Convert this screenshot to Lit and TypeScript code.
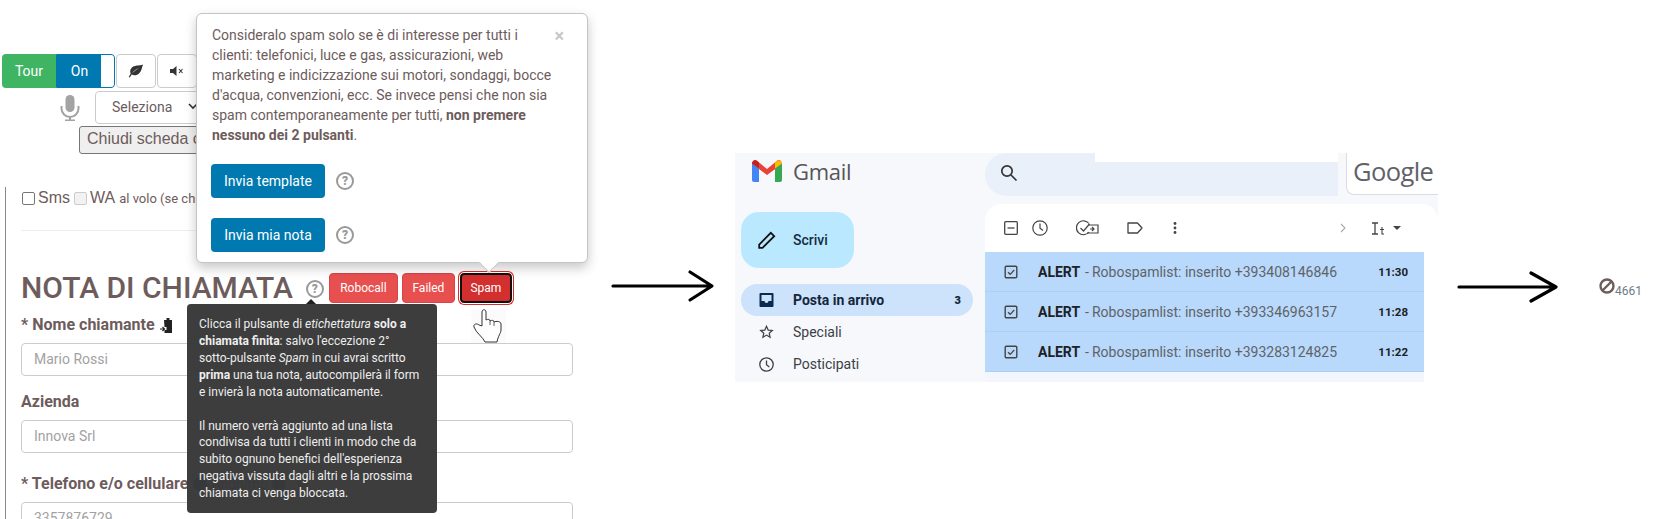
import { LitElement, html, css, svg } from "lit";
import { customElement } from "lit/decorators.js";

const ROWS = [
  ["+393408146846", "11:30"],
  ["+393346963157", "11:28"],
  ["+393283124825", "11:22"],
];

const checked = svg`<rect x="1.2" y="1.2" width="11.6" height="11.6" rx="1.2" fill="none" stroke="#444" stroke-width="1.4"/><path d="M4 7.2l2.2 2.1L10.2 5" fill="none" stroke="#444" stroke-width="1.2"/>`;

@customElement("app-root")
export class AppRoot extends LitElement {
  static styles = css`
    :host { display: block; position: relative; width: 1680px; height: 519px; overflow: hidden; background: #fff; font-family: Roboto, sans-serif; color: #6d5c5c; }
    * { box-sizing: border-box; }
    .canvas-left { position: absolute; left: 0; top: 0; width: 600px; height: 519px; overflow: hidden; padding-top: 54px; }
    .toolbar { display: flex; margin-left: 2px; height: 34px; }
    .tb { height: 34px; display: flex; align-items: center; justify-content: center; font-size: 14px; color: #fff; border-radius: 4px; }
    .tour { width: 54px; background: #3fb463; border-radius: 4px 0 0 4px; }
    .on { width: 59px; background: #0079b1; border-radius: 0 4px 4px 0; position: relative; padding-right: 12px; border: 1px solid #0079b1; }
    .on i { position: absolute; right: 0; top: 0; bottom: 0; width: 13px; background: #fff; border-radius: 0 3px 3px 0; }
    .ghost { width: 40px; background: #fff; border: 1px solid #ccc; margin-left: 1px; }
    .row2 { display: flex; align-items: center; margin: 3px 0 0 60px; height: 33px; }
    .mic { width: 20px; height: 26px; margin-right: 15px; }
    .select { width: 120px; height: 33px; border: 1px solid #ccc; border-radius: 4px; font-size: 14px; padding: 0 0 2px 16px; display: flex; align-items: center; gap: 16px; }
    .close-tab { display: block; margin: 2px 0 0 79px; width: 200px; height: 28px; background: #efefef; border: 1px solid #767676; border-radius: 3px; font: 16px "Liberation Sans", sans-serif; color: #6d5c5c; padding: 0 7px; line-height: 23px; white-space: nowrap; overflow: hidden; }
    .section { margin: 33px 0 0 5px; padding: 2px 0 0 15px; border-left: 1px solid #888; width: 568px; height: 340px; }
    .checks { display: flex; align-items: center; height: 18px; font: 16px "Liberation Sans", sans-serif; white-space: nowrap; }
    .cb { width: 13px; height: 13px; border: 1px solid #767676; border-radius: 2px; background: #fff; margin: 0 3px 0 1px; }
    .cb.off { border-color: #ccc; background: #f2f2f2; margin-left: 4px; }
    .small { font: 13px Roboto, sans-serif; margin-left: 4px; }
    hr { border: 0; border-top: 1px solid #eee; margin: 23px 0 0; }
    .title-row { display: flex; align-items: center; margin-top: 37px; height: 40px; }
    h1 { margin: 0; font-size: 30px; font-weight: 500; line-height: 40px; white-space: nowrap; letter-spacing: 0; }
    .help { display: flex; align-items: center; justify-content: center; width: 18px; height: 18px; border: 2.5px solid #999; border-radius: 50%; color: #999; font-size: 12px; font-weight: 900; line-height: 1; flex: none; }
    .title-row .help { margin: 1px 5px 0 13px; }
    .red { height: 30px; margin-right: 4px; background: #e85050; border-radius: 4px; color: #fff; font-size: 12px; display: flex; align-items: center; justify-content: center; border: 1px solid #d9434a; }
    .robocall { width: 69px; }
    .failed { width: 53px; }
    .spam { width: 52px; background: #d32f2f; border: 2px solid #111; outline: 1px solid #fff; box-shadow: 0 0 0 2px #d32f2f; margin-left: 1px; font-size: 12px; }
    label { display: block; font-size: 16px; font-weight: 700; line-height: 20px; white-space: nowrap; height: 20px; }
    .l1 { margin-top: 7px; display: flex; align-items: center; gap: 5px; }
    .l2 { margin-top: 16px; }
    .l3 { margin-top: 21px; display: flex; align-items: center; }
    .input { width: 552px; height: 33px; border: 1px solid #ccc; border-radius: 4px; margin-top: 8px; padding-left: 12px; font-size: 14px; line-height: 31px; color: #a2a2a2; }
    .behind { display: flex; align-items: center; gap: 4px; margin-left: 5px; font-weight: 400; color: #3d6a85; font-size: 14px; }
    .behind .dot { width: 14px; height: 14px; border-radius: 50%; background: #1f5f99; }
    .behind .bulb { width: 10px; height: 14px; border-radius: 50% 50% 30% 30%; background: #b09040; margin-left: 8px; }

    .popover { position: absolute; left: 196px; top: 13px; width: 392px; height: 250px; background: #fff; border: 1px solid #c4c4c4; border-radius: 6px; box-shadow: 0 5px 12px rgba(0,0,0,.22); padding: 11px 15px 0 14px; font-size: 14px; line-height: 20px; }
    .popover p { margin: 0 0 0 1px; width: 346px; }
    .popover .x { position: absolute; right: 23px; top: 12px; color: #c8c8c8; font-size: 18px; font-weight: 700; line-height: 20px; }
    .pop-row { display: flex; align-items: center; margin-top: 20px; gap: 11px; }
    .pop-row.first { margin-top: 19px; }
    .blue { width: 114px; height: 34px; background: #0079b1; border-radius: 4px; color: #fff; font-size: 14px; display: flex; align-items: center; justify-content: center; }
    .caret { position: absolute; left: 285px; bottom: -8px; width: 14px; height: 14px; background: #fff; border-right: 1px solid #c4c4c4; border-bottom: 1px solid #c4c4c4; transform: rotate(45deg); }
    .tooltip { position: absolute; left: 187px; top: 304px; width: 250px; height: 209px; background: rgba(55,55,55,.97); border-radius: 4px; padding: 12px 12px; color: #eee; font-size: 12px; line-height: 16.9px; }
    .tooltip::before { content: ""; position: absolute; left: 119px; top: -5px; border: 5px solid transparent; border-top: 0; border-bottom-color: #222; }
    .tooltip p { margin: 0 0 17px; }
    .hand { position: absolute; left: 471px; top: 309px; width: 35px; height: 34px; background: #fbfbfb; }

    .arrow { position: absolute; }
    .a1 { left: 610px; top: 268px; }
    .a2 { left: 1456px; top: 269px; }
    .blocked { position: absolute; left: 1599px; top: 278px; display: flex; align-items: flex-start; font-size: 12px; color: #6c7a89; line-height: 14px; }
    .blocked span { margin-top: 6px; }

    .gmail { position: absolute; left: 735px; top: 153px; width: 703px; height: 229px; display: flex; background: #f6f8fc; font-family: Roboto, sans-serif; color: #1f1f1f; }
    .side { width: 250px; flex: none; padding-left: 6px; }
    .brand { display: flex; align-items: center; height: 40px; padding: 0 0 0 11px; margin-top: -2px; gap: 11px; font-family: "Open Sans", sans-serif; font-size: 22px; color: #555; letter-spacing: -.3px; }
    .compose { margin-top: 21px; width: 113px; height: 56px; border-radius: 18px; background: #b9e8ff; display: flex; align-items: center; padding-left: 17px; gap: 17px; font-size: 14px; font-weight: 500; color: #152d3f; }
    .nav { width: 232px; height: 32px; display: flex; align-items: center; padding: 0 12px 0 18px; gap: 19px; font-size: 14px; color: #3c3f44; border-radius: 16px; margin-top: -1px; }
    .nav svg { width: 15px; flex: none; }
    .nav span { flex: 1; }
    .nav.active { margin-top: 16px; background: #cde2fb; color: #13263c; font-weight: 700; }
    .nav.active b { font-size: 11px; }
    .nav + .nav { margin-top: 0; }
    .main { width: 453px; flex: none; display: flex; flex-direction: column; }
    .top { height: 43px; display: flex; flex: none; }
    .search { width: 353px; height: 43px; background: #e9f0f9; border-radius: 22px 0 0 22px; position: relative; padding: 11px 0 0 15px; }
    .notch { position: absolute; right: 0; top: 0; width: 243px; height: 9px; background: #fff; }
    .google { margin-left: 8px; width: 92px; height: 42px; background: #fff; border: 1px solid #dadce0; border-width: 0 0 1px 1px; border-radius: 0 0 0 8px; overflow: hidden; font-family: "Open Sans", sans-serif; font-size: 25.5px; font-weight: 500; color: #5f6368; line-height: 37px; padding-left: 6px; white-space: nowrap; letter-spacing: -.6px; }
    .card { margin-top: 8px; background: #fff; border-radius: 16px 16px 0 0; flex: 1; position: relative; }
    .tools { height: 48px; display: flex; align-items: center; position: relative; padding-left: 19px; }
    .tools svg { flex: none; }
    .tool-right { margin-left: auto; display: flex; align-items: center; margin-right: 37px; }
    .rows { width: 439px; background: #f3f6fc; height: 130px; }
    .row { height: 40px; background: #b8d9fb; border-bottom: 1px solid #acd0f2; display: flex; align-items: center; padding: 0 16px 0 19px; font-size: 14px; color: #5f6368; white-space: nowrap; }
    .row b { color: #202124; font-weight: 700; margin-left: 20px; }
    .row .dash { margin: 0 3px 0 5px; }
    .row time { margin-left: auto; font-size: 11.5px; font-weight: 700; color: #202124; }
  `;

  private help() {
    return html`<span class="help">?</span>`;
  }

  render() {
    return html`
      <div class="canvas-left">
        <div class="toolbar">
          <div class="tb tour">Tour</div>
          <div class="tb on">On<i></i></div>
          <div class="tb ghost">
            <svg width="16" height="14" viewBox="0 0 16 14"><path d="M15 .5C11 1.8 6 1 3.5 4 1.8 6 2 8.3 2.7 9.5L.7 13l1 .6 2-3c2 1.3 5.5 1 7.500-1.300C13.500 7 14 3.500 15 .5zM4 9.500C5.500 7 8 5 11 4 8.500 5.500 6 7.500 4 9.500z" fill="#333" fill-rule="evenodd"/></svg>
          </div>
          <div class="tb ghost">
            <svg width="14" height="10" viewBox="0 0 14 10"><path d="M0 3h3l3.500-3v10L3 7H0z" fill="#333"/><path d="M9 3l3.500 4M12.500 3L9 7" stroke="#333" stroke-width="1.100"/></svg>
          </div>
        </div>
        <div class="row2">
          <svg class="mic" viewBox="0 0 20 26"><rect x="5.500" y="0" width="9" height="17" rx="4.500" fill="#a3a3a3"/><path d="M1.500 11v2.500a8.500 8.500 0 0 0 17 0V11" fill="none" stroke="#a3a3a3" stroke-width="2"/><path d="M10 22v3M5 25.500h10" stroke="#a3a3a3" stroke-width="2"/></svg>
          <div class="select">Seleziona
            <svg width="10" height="7" viewBox="0 0 10 7"><path d="M1 1l4 4 4-4" fill="none" stroke="#333" stroke-width="1.600"/></svg>
          </div>
        </div>
        <div class="close-tab">Chiudi scheda chiamata</div>
        <div class="section">
          <div class="checks"><span class="cb"></span>Sms<span class="cb off"></span>WA<span class="small">al volo (se chiamata persa)</span></div>
          <hr />
          <div class="title-row">
            <h1>NOTA DI CHIAMATA</h1>
            ${this.help()}
            <div class="red robocall">Robocall</div>
            <div class="red failed">Failed</div>
            <div class="red spam">Spam</div>
          </div>
          <label class="l1">* Nome chiamante
            <svg width="14" height="15" viewBox="0 0 14 15"><path d="M4 2h2.500V0h3v2H12v13H4.500v-3h2v-3h-2z" fill="#222"/><path d="M0 11h4M2.500 9l2 2-2 2" fill="none" stroke="#222" stroke-width="1.200"/></svg>
          </label>
          <div class="input">Mario Rossi</div>
          <label class="l2">Azienda</label>
          <div class="input">Innova Srl</div>
          <label class="l3">* Telefono e/o cellulare
            <span class="behind"><i class="dot"></i>Anonimo<i class="dot"></i><i class="bulb"></i></span>
          </label>
          <div class="input">3357876729</div>
        </div>
      </div>

      <div class="popover">
        <p>Consideralo spam solo se è di interesse per tutti i clienti: telefonici, luce e gas, assicurazioni, web marketing e indicizzazione sui motori, sondaggi, bocce d'acqua, convenzioni, ecc. Se invece pensi che non sia spam contemporaneamente per tutti, <b>non premere nessuno dei 2 pulsanti</b>.</p>
        <span class="x">×</span>
        <div class="pop-row first"><div class="blue">Invia template</div>${this.help()}</div>
        <div class="pop-row"><div class="blue">Invia mia nota</div>${this.help()}</div>
        <i class="caret"></i>
      </div>

      <div class="tooltip">
        <p>Clicca il pulsante di <em>etichettatura</em> <b>solo a chiamata finita</b>: salvo l'eccezione 2°<br />sotto-pulsante <em>Spam</em> in cui avrai scritto<br /><b>prima</b> una tua nota, autocompilerà il form<br />e invierà la nota automaticamente.</p>
        <p>Il numero verrà aggiunto ad una lista condivisa da tutti i clienti in modo che da subito ognuno benefici dell'esperienza negativa vissuta dagli altri e la prossima chiamata ci venga bloccata.</p>
      </div>

      <div class="hand">
        <svg width="35" height="34" viewBox="0 0 35 34"><path d="M11 17V3c0-3 4-3 4 0v8c2-1 4-1 4 1 2-1 4-1 4 1 2-1 7-1 7 2v6c0 3-3 6-4 12H14C12 28 5 24 3 18c-1-3 3-4 5-2z" fill="#fff" stroke="#333" stroke-width="1" stroke-linejoin="round"/><path d="M19 12v4M23 13v4" stroke="#333" stroke-width=".8"/></svg>
      </div>

      <svg class="arrow a1" width="106" height="36" viewBox="0 0 106 36"><path d="M3 18h98M80 4l22 14-22 14" fill="none" stroke="#000" stroke-width="3.200" stroke-linecap="round" stroke-linejoin="round"/></svg>

      <div class="gmail">
        <div class="side">
          <div class="brand">
            <svg width="30" height="22" viewBox="0 0 30 22">
              <path d="M0 3l2-3h2l11 9v6L0 4z" fill="#e94335"/><path d="M30 3l-2-3h-2L15 9v6l15-11z" fill="#e94335"/>
              <path d="M0 3.500l7 5V22H2a2 2 0 0 1-2-2z" fill="#4285f4"/><path d="M30 3.500l-7 5V22h5a2 2 0 0 0 2-2z" fill="#34a853"/>
              <path d="M0 3a3 3 0 0 1 5-2l2 1.500v6L0 3.500z" fill="#c5221f"/><path d="M30 3a3 3 0 0 0-5-2l-2 1.500v6l7-5z" fill="#fbbc04"/>
            </svg>
            Gmail
          </div>
          <div class="compose">
            <svg width="18" height="18" viewBox="0 0 18 18"><path d="M1.200 16.800v-3.300L12.800 1.800l3.400 3.400L4.500 16.800z" fill="none" stroke="#111" stroke-width="1.800"/></svg>
            Scrivi
          </div>
          <div class="nav active">
            <svg height="14" viewBox="0 0 14 14"><path d="M1 0h12a1 1 0 0 1 1 1v12a1 1 0 0 1-1 1H1a1 1 0 0 1-1-1V1a1 1 0 0 1 1-1zm1 2v6h3a2 2 0 0 0 4 0h3V2z" fill="#0b2a4f" fill-rule="evenodd"/></svg>
            <span>Posta in arrivo</span><b>3</b>
          </div>
          <div class="nav">
            <svg height="14" viewBox="0 0 14 14"><path d="M7 1.300l1.700 3.800 4.100.4-3.100 2.700.9 4-3.600-2.100-3.600 2.100.9-4L1.200 5.500l4.100-.4z" fill="none" stroke="#3c3f44" stroke-width="1.200"/></svg>
            <span>Speciali</span>
          </div>
          <div class="nav">
            <svg height="15" viewBox="0 0 15 15"><circle cx="7.500" cy="7.500" r="6.700" fill="none" stroke="#3c3f44" stroke-width="1.300"/><path d="M7.500 3.500v4.200l2.800 2.300" fill="none" stroke="#3c3f44" stroke-width="1.300"/></svg>
            <span>Posticipati</span>
          </div>
        </div>
        <div class="main">
          <div class="top">
            <div class="search">
              <i class="notch"></i>
              <svg width="18" height="18" viewBox="0 0 18 18"><circle cx="7" cy="7" r="5.200" fill="none" stroke="#333" stroke-width="1.700"/><path d="M11 11l5.500 5.500" stroke="#333" stroke-width="1.700"/></svg>
            </div>
            <div class="google">Google</div>
          </div>
          <div class="card">
            <div class="tools">
              <svg width="14" height="14" viewBox="0 0 14 14"><rect x=".7" y=".7" width="12.600" height="12.600" rx="1" fill="none" stroke="#444" stroke-width="1.300"/><path d="M3.500 7h7" stroke="#444" stroke-width="1.300"/></svg>
              <svg style="margin-left:14px" width="16" height="16" viewBox="0 0 16 16"><circle cx="8" cy="8" r="7.200" fill="none" stroke="#444" stroke-width="1.200"/><path d="M8 3.500v4.700l3 2.300" fill="none" stroke="#444" stroke-width="1.200"/></svg>
              <svg style="margin-left:28px" width="23" height="16" viewBox="0 0 23 16"><path d="M13 3.500A7 7 0 1 0 13 12" fill="none" stroke="#444" stroke-width="1.200"/><path d="M4.500 8l3 3 6-7" fill="none" stroke="#444" stroke-width="1.200"/><path d="M12 5h10v8H11M14 9h4M16 7l2 2-2 2" fill="none" stroke="#444" stroke-width="1.200"/></svg>
              <svg style="margin-left:28px" width="16" height="12" viewBox="0 0 16 12"><path d="M1 1h9.500L15 6l-4.500 5H1z" fill="none" stroke="#444" stroke-width="1.300" stroke-linejoin="round"/></svg>
              <svg style="margin-left:30px" width="4" height="12" viewBox="0 0 4 12"><circle cx="2" cy="1.500" r="1.400" fill="#444"/><circle cx="2" cy="6" r="1.400" fill="#444"/><circle cx="2" cy="10.500" r="1.400" fill="#444"/></svg>
              <div class="tool-right">
                <svg width="6" height="10" viewBox="0 0 6 10"><path d="M1 1l4 4-4 4" fill="none" stroke="#aaa" stroke-width="1.100"/></svg>
                <svg style="margin-left:25px" width="14" height="13" viewBox="0 0 14 13"><path d="M1 1h6M1 12h6M4 1v11" stroke="#444" stroke-width="1.300" fill="none"/><path d="M11 5v7h2M9 7.500h4" stroke="#444" stroke-width="1.100" fill="none"/></svg>
                <svg style="margin-left:8px" width="8" height="4" viewBox="0 0 8 4"><path d="M0 0h8L4 4z" fill="#444"/></svg>
              </div>
            </div>
            <div class="rows">
              ${ROWS.map(([n, t]) => html`<div class="row">
                <svg width="14" height="14" viewBox="0 0 14 14">${checked}</svg>
                <b>ALERT</b><span class="dash">-</span>Robospamlist: inserito ${n}<time>${t}</time>
              </div>`)}
            </div>
          </div>
        </div>
      </div>

      <svg class="arrow a2" width="104" height="36" viewBox="0 0 104 36"><path d="M3 18h96M75 4l25 14-25 14" fill="none" stroke="#000" stroke-width="3.200" stroke-linecap="round" stroke-linejoin="round"/></svg>

      <div class="blocked">
        <svg width="16" height="16" viewBox="0 0 16 16"><circle cx="8" cy="8" r="6.500" fill="none" stroke="#6d5c5c" stroke-width="2.400"/><path d="M3.500 12.500l9-9" stroke="#6d5c5c" stroke-width="2.400"/></svg>
        <span>4661</span>
      </div>
    `;
  }
}
